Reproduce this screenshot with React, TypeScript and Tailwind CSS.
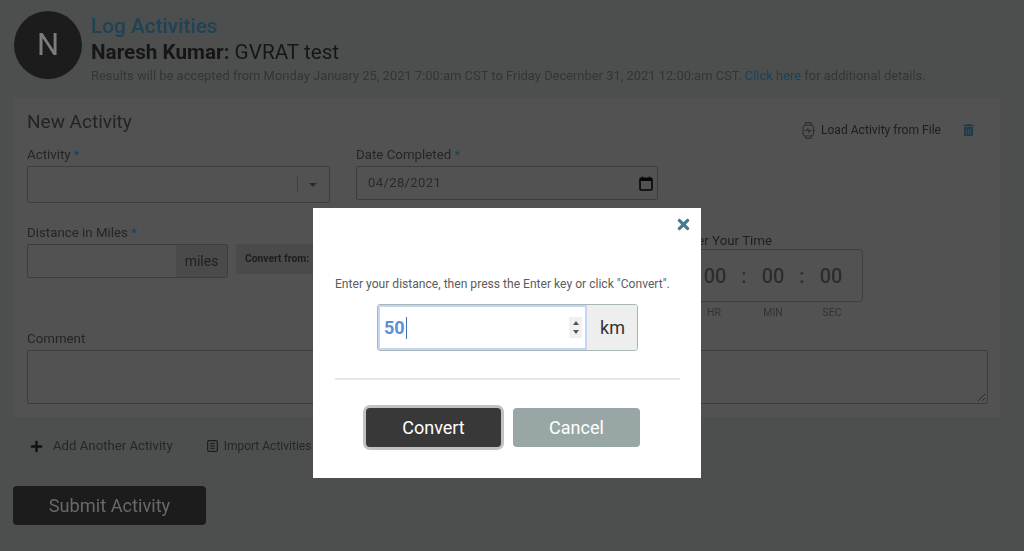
import React from 'react';
import { FaPlus, FaTimes, FaTrashAlt } from 'react-icons/fa';

const WatchIcon = () => (
    <svg width="13" height="17" viewBox="0 0 13 17" fill="none" stroke="#222" strokeWidth="0.8">
        <rect x="1" y="3" width="10.5" height="11" rx="2.5" />
        <path d="M3 3 L3.6 0.6 H9 L9.6 3 M3 14 L3.6 16.4 H9 L9.6 14" />
        <path d="M2.5 8.5 H5 L5.8 6.5 L6.9 10.5 L7.6 8.5 H10" />
        <path d="M12.2 7.5 V9.5" />
    </svg>
);

const CalendarIcon = () => (
    <svg width="14" height="15" viewBox="0 0 14 15" fill="none">
        <rect x="1" y="2.2" width="12" height="11.8" rx="1" stroke="#050505" strokeWidth="1.6" />
        <rect x="1" y="2" width="12" height="3" fill="#050505" />
        <path d="M3.5 0.5 V2 M10.5 0.5 V2" stroke="#050505" strokeWidth="1.2" />
    </svg>
);

const ImportIcon = () => (
    <svg width="11" height="12" viewBox="0 0 11 12" fill="none" stroke="#1c1c1c">
        <rect x="0.7" y="0.7" width="9.6" height="10.6" rx="1" strokeWidth="1.2" />
        <path d="M3 3.7 H8 M3 6 H8 M3 8.3 H8" strokeWidth="1" />
    </svg>
);

const Req = () => <span className="text-[#1c4256]"> *</span>;

const Label: React.FC<{ children: React.ReactNode }> = ({ children }) => (
    <div className="text-[13.3px] leading-[16px] text-[#252525]">{children}</div>
);

export default function App() {
    return (
        <div className="relative h-[551px] w-[1024px] overflow-hidden bg-[#4d4f4e] font-['Roboto',sans-serif]">
            <div className="blur-[0.4px]">
                {/* header */}
                <div className="flex items-start gap-[9px] pl-[14px] pt-[11px]">
                    <div className="flex h-[68px] w-[68px] items-center justify-center rounded-full bg-[#1c1c1c] text-[31px] text-[#7c7c7c]">
                        N
                    </div>
                    <div className="pt-[2px]">
                        <div className="text-[20.8px] leading-[26px] font-medium text-[#1e4256]">Log Activities</div>
                        <div className="text-[20.7px] leading-[26px] text-[#161616]">
                            <span className="font-bold">Naresh Kumar:</span> GVRAT test
                        </div>
                        <div className="mt-[2px] text-[12.95px] leading-[18px] whitespace-nowrap text-[#343535]">
                            Results will be accepted from Monday January 25, 2021 7:00:am CST to Friday December 31, 2021 12:00:am CST.{' '}
                            <span className="text-[#1a4258]">Click here</span> for additional details.
                        </div>
                    </div>
                </div>

                {/* form card */}
                <div className="mt-[13px] ml-[14px] h-[319px] w-[986px] bg-[#525252] px-[13px] pt-[12px]">
                    <div className="flex items-start justify-between">
                        <div className="text-[19px] leading-[24px] text-[#232323]">New Activity</div>
                        <div className="mt-[11px] mr-[13px] flex items-center text-[12.1px] text-[#1e1e1e]">
                            <WatchIcon />
                            <span className="ml-[6px]">Load Activity from File</span>
                            <FaTrashAlt className="ml-[22px] h-[12px] w-[11px] text-[#1a3c4e]" />
                        </div>
                    </div>

                    <div className="mt-[8px] flex gap-[26px]">
                        <div>
                            <Label>Activity<Req /></Label>
                            <div className="mt-[3px] flex h-[37px] w-[303px] items-center justify-end rounded-[2px] border border-[#3d3d3d]">
                                <div className="h-[16px] w-px bg-[#3f3f3f]" />
                                <div className="mr-[12px] ml-[11px] h-0 w-0 border-x-[4px] border-t-[4px] border-x-transparent border-t-[#2c2c2c]" />
                            </div>
                        </div>
                        <div>
                            <Label>Date Completed<Req /></Label>
                            <div className="mt-[3px] flex h-[34px] w-[302px] items-center justify-between rounded-[2px] border border-[#3d3d3d] pr-[4px] pl-[11px] text-[13px] tracking-[0.4px] text-[#2a2a2a]">
                                <span>04/28/2021</span>
                                <CalendarIcon />
                            </div>
                        </div>
                    </div>

                    <div className="mt-[22px] flex h-[110px] items-start">
                        <div>
                            <Label>Distance in Miles<Req /></Label>
                            <div className="mt-[3px] flex h-[34px] w-[201px] justify-end rounded-[2px] border border-[#3d3d3d]">
                                <div className="flex w-[51px] items-center justify-center bg-[#4a4a4a] text-[14px] text-[#1f1f1f]">miles</div>
                            </div>
                        </div>
                        <div className="mt-[19px] ml-[8px] flex h-[30px] w-[120px] items-center rounded-[2px] bg-[#4a4a4a] pl-[9px] text-[10.3px] font-bold whitespace-nowrap text-[#1e1e1e]">
                            Convert from:
                        </div>
                        <div className="mt-[8px] ml-[322px]">
                            <Label><span className="text-[#1f1f1f]">Enter Your Time</span></Label>
                            <div className="flex h-[53px] w-[185px] items-center justify-end gap-[9px] rounded-[4px] border border-[#3f3f3f] pr-[14px] text-[20px] font-medium text-[#2d2d2d]">
                                <span className="w-[34px] text-center">00</span>
                                <span className="w-[6px] text-center">:</span>
                                <span className="w-[34px] text-center">00</span>
                                <span className="w-[6px] text-center">:</span>
                                <span className="w-[34px] text-center">00</span>
                            </div>
                            <div className="mt-[4px] flex justify-end gap-[25px] pr-[14px] text-[10.5px] leading-[14px] text-[#333]">
                                <span className="w-[34px] text-center">HR</span>
                                <span className="w-[34px] text-center">MIN</span>
                                <span className="w-[34px] text-center">SEC</span>
                            </div>
                        </div>
                    </div>

                    <div className="-mt-[4px]">
                        <Label>Comment</Label>
                        <div className="relative mt-[3px] h-[54px] w-[961px] rounded-[2px] border border-[#3d3d3d]">
                            <svg className="absolute right-[1px] bottom-[1px]" width="9" height="9" viewBox="0 0 9 9" stroke="#222" strokeWidth="0.8">
                                <path d="M1 8 L8 1 M5 8 L8 5" />
                            </svg>
                        </div>
                    </div>
                </div>

                {/* links below the card */}
                <div className="mt-[21px] flex items-center pl-[30px] text-[13.2px] leading-[16px] text-[#262626]">
                    <FaPlus className="h-[13px] w-[13px] text-[#111]" />
                    <span className="ml-[10px]">Add Another Activity</span>
                    <span className="ml-[34px]"><ImportIcon /></span>
                    <span className="ml-[6px] text-[12px]">Import Activities</span>
                </div>

                <div className="mt-[32px] ml-[13px] flex h-[39px] w-[193px] items-center justify-center rounded-[4px] bg-[#1c1c1c] text-[18.2px] text-[#686a69]">
                    Submit Activity
                </div>
            </div>

            {/* convert dialog */}
            <div className="absolute top-[208px] left-[313px] h-[270px] w-[388px] bg-white">
                <FaTimes className="absolute top-[8px] right-[9px] h-[17px] w-[17px] text-[#457c92]" />
                <div className="pt-[69px] pl-[22px] text-[12.1px] leading-[14px] whitespace-nowrap text-[#5c5c5c]">
                    Enter your distance, then press the Enter key or click "Convert".
                </div>
                <div className="mt-[13px] ml-[64px] flex h-[47px] w-[261px] overflow-hidden rounded-[3px] border border-[#a9b6b6]">
                    <div className="flex flex-1 items-center justify-between border-2 border-[#c3d7f3] pr-[3px] pl-[4px]">
                        <div className="flex items-center text-[18px] font-bold text-[#5d90dc]">
                            50<span className="ml-px h-[22px] w-px bg-[#3f6fb5]" />
                        </div>
                        <div className="flex h-[21px] w-[13px] flex-col items-center justify-center gap-[5px] bg-[#f0f0f0]">
                            <div className="h-0 w-0 border-x-[3px] border-b-[4px] border-x-transparent border-b-[#555]" />
                            <div className="h-0 w-0 border-x-[3px] border-t-[4px] border-x-transparent border-t-[#555]" />
                        </div>
                    </div>
                    <div className="flex w-[50px] items-center justify-center bg-[#eeeeee] pl-px text-[18px] text-[#333]">km</div>
                </div>
                <div className="mt-[27px] ml-[22px] h-[2px] w-[345px] bg-[#e8e8e8]" />
                <div className="mt-[28px] ml-[53px] flex gap-[12px]">
                    <div className="flex h-[39px] w-[135px] items-center justify-center rounded-[4px] bg-[#383838] text-[18px] text-white ring-[3px] ring-[#c2c2c2]">
                        Convert
                    </div>
                    <div className="flex h-[39px] w-[127px] items-center justify-center rounded-[4px] bg-[#99a6a6] text-[18px] text-white">
                        Cancel
                    </div>
                </div>
            </div>
        </div>
    );
}
